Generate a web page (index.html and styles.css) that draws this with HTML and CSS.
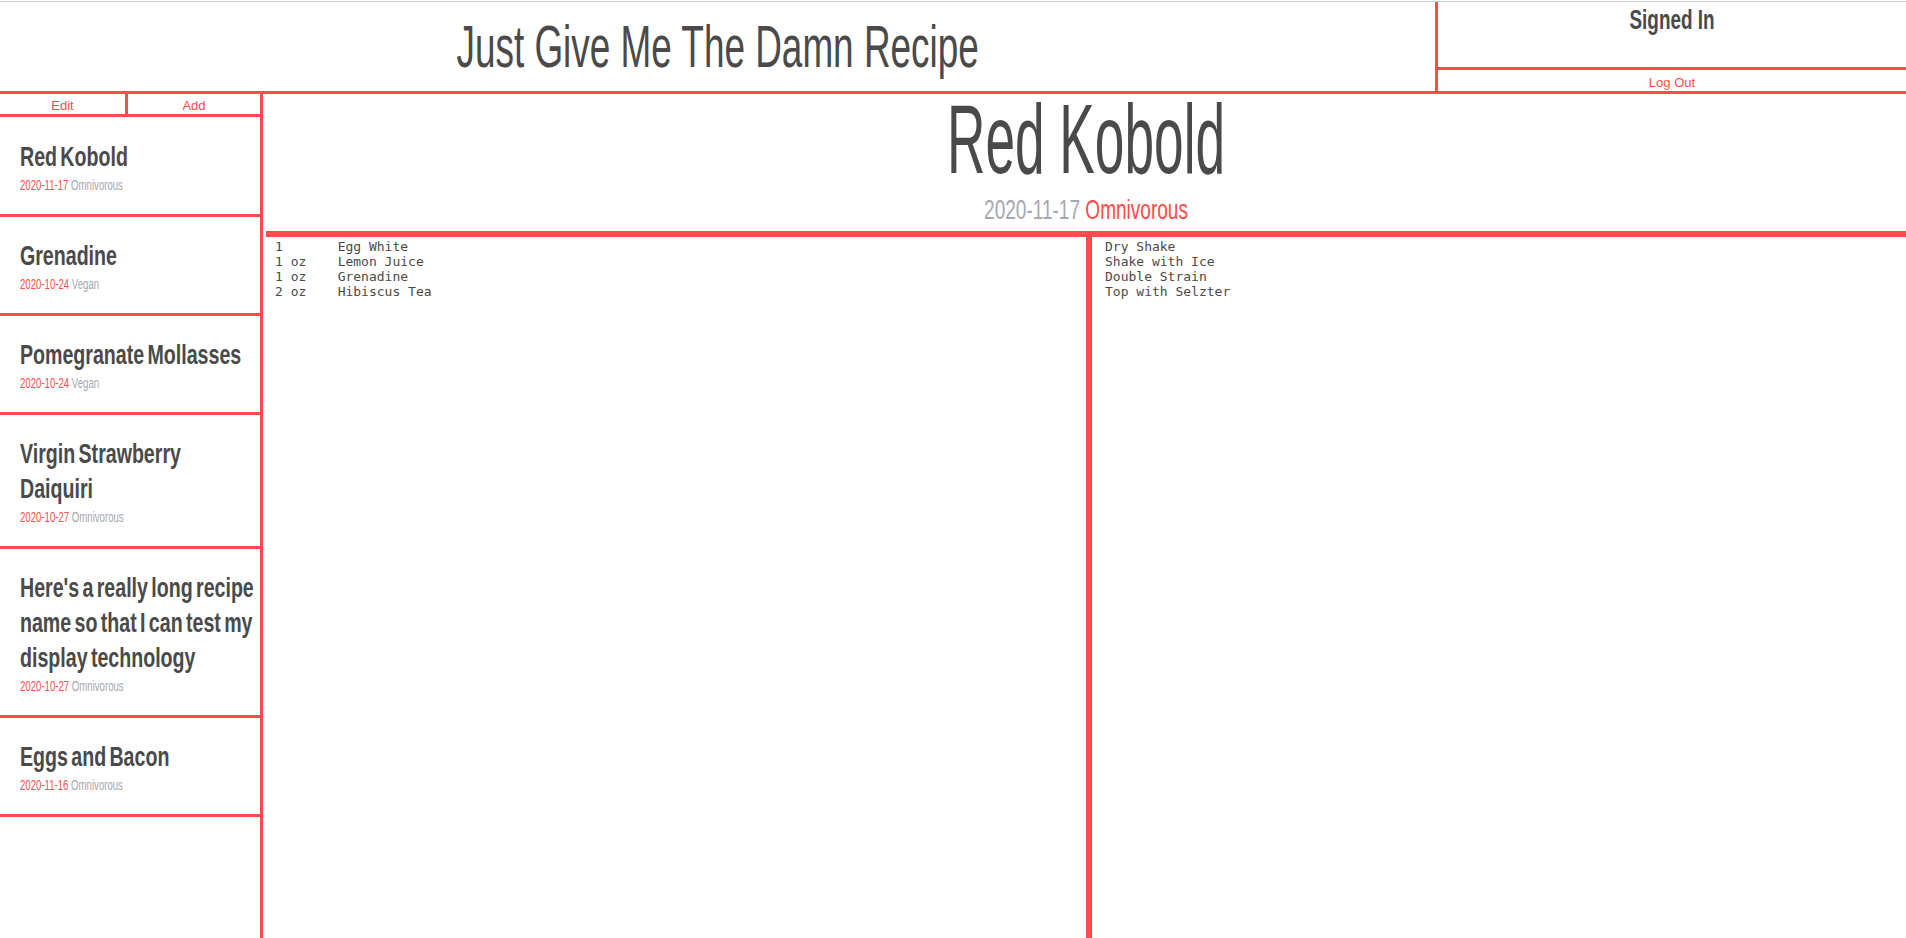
FILE: index.html
```html
<!DOCTYPE html>
<html lang="en">
<head>
<meta charset="utf-8">
<title>Just Give Me The Damn Recipe</title>
<link rel="stylesheet" href="styles.css">
</head>
<body>
<div class="topline"></div>
<header class="site-header">
  <div class="brand"><h1 class="brand-title">Just Give Me The Damn Recipe</h1></div>
  <div class="account">
    <div class="account-status"><h2 class="account-title">Signed In</h2></div>
    <a class="account-action">Log Out</a>
  </div>
</header>
<div class="layout">
  <aside class="sidebar">
    <div class="sidebar-actions">
      <a class="action">Edit</a>
      <a class="action">Add</a>
    </div>
    <ul class="recipe-list">
      <li class="recipe-item">
        <h3 class="item-title">Red Kobold</h3>
        <div class="item-meta"><span class="item-date">2020-11-17</span> <span class="item-diet">Omnivorous</span></div>
      </li>
      <li class="recipe-item">
        <h3 class="item-title">Grenadine</h3>
        <div class="item-meta"><span class="item-date">2020-10-24</span> <span class="item-diet">Vegan</span></div>
      </li>
      <li class="recipe-item">
        <h3 class="item-title">Pomegranate Mollasses</h3>
        <div class="item-meta"><span class="item-date">2020-10-24</span> <span class="item-diet">Vegan</span></div>
      </li>
      <li class="recipe-item">
        <h3 class="item-title">Virgin Strawberry Daiquiri</h3>
        <div class="item-meta"><span class="item-date">2020-10-27</span> <span class="item-diet">Omnivorous</span></div>
      </li>
      <li class="recipe-item">
        <h3 class="item-title">Here's a really long recipe name so that I can test my display technology</h3>
        <div class="item-meta"><span class="item-date">2020-10-27</span> <span class="item-diet">Omnivorous</span></div>
      </li>
      <li class="recipe-item">
        <h3 class="item-title">Eggs and Bacon</h3>
        <div class="item-meta"><span class="item-date">2020-11-16</span> <span class="item-diet">Omnivorous</span></div>
      </li>
    </ul>
  </aside>
  <main class="recipe">
    <div class="recipe-head">
      <h1 class="recipe-title">Red Kobold</h1>
      <div class="recipe-meta"><span class="recipe-date">2020-11-17</span> <span class="recipe-diet">Omnivorous</span></div>
    </div>
    <div class="recipe-body">
      <pre class="ingredients">1	Egg White
1 oz	Lemon Juice
1 oz	Grenadine
2 oz	Hibiscus Tea</pre>
      <pre class="steps">Dry Shake
Shake with Ice
Double Strain
Top with Selzter</pre>
    </div>
  </main>
</div>
</body>
</html>
```
FILE: styles.css
```css
* { box-sizing: border-box; }

html, body {
  margin: 0;
  padding: 0;
  background: #ffffff;
}

body {
  min-height: 100vh;
  display: flex;
  flex-direction: column;
  color: #4a4a4a;
  font-family: "Liberation Sans", Arial, sans-serif;
}

/* condensed display type: no condensed face is installed, so the
   regular face is narrowed horizontally */
.brand-title,
.account-title,
.item-title,
.item-meta,
.recipe-title,
.recipe-meta {
  font-family: "Liberation Sans", Arial, sans-serif;
}

.topline {
  height: 1px;
  margin-top: 1px;
  background: #c9c9c9;
}

/* ---------- header ---------- */
.site-header {
  display: flex;
  height: 92px;
  border-bottom: 3px solid #ff4b4b;
}

.brand {
  flex: 1;
  display: flex;
  align-items: center;
  justify-content: center;
}

.brand-title {
  margin: 0;
  font-weight: 400;
  font-size: 60px;
  line-height: 60px;
  color: #4a4a4a;
  white-space: nowrap;
  transform: scaleX(0.615);
}

.account {
  width: 471px;
  border-left: 3px solid #ff4b4b;
  display: flex;
  flex-direction: column;
}

.account-status {
  height: 68px;
  padding-top: 2px;
  border-bottom: 3px solid #ff4b4b;
  text-align: center;
}

.account-title {
  margin: 0;
  font-weight: 700;
  font-size: 27px;
  line-height: 32px;
  color: #4a4a4a;
  transform: scaleX(0.7);
}

.account-action {
  flex: 1;
  display: flex;
  align-items: center;
  justify-content: center;
  padding-top: 3px;
  font-size: 13px;
  color: #ff4b4b;
}

/* ---------- layout ---------- */
.layout {
  flex: 1;
  display: flex;
}

.sidebar {
  width: 263px;
  flex-shrink: 0;
  border-right: 3px solid #ff4b4b;
}

.sidebar-actions {
  display: flex;
  height: 23px;
  border-bottom: 3px solid #ff4b4b;
}

.action {
  display: flex;
  align-items: center;
  justify-content: center;
  padding-top: 2px;
  font-size: 13px;
  color: #ff4b4b;
}

.action:first-child {
  width: 128px;
  border-right: 3px solid #ff4b4b;
}

.action:last-child {
  flex: 1;
}

.recipe-list {
  list-style: none;
  margin: 0;
  padding: 1px 0 0;
}

.recipe-item {
  padding: 21px 0 19px 20px;
  border-bottom: 3px solid #ff4b4b;
}

.item-title {
  width: 337px;
  margin: 0;
  font-weight: 700;
  font-size: 28px;
  line-height: 35px;
  word-spacing: -3px;
  color: #4a4a4a;
  transform: scaleX(0.7);
  transform-origin: 0 0;
}

.item-meta {
  margin-top: 1px;
  font-weight: 400;
  font-size: 15.5px;
  line-height: 20px;
  white-space: nowrap;
  transform: scaleX(0.62);
  transform-origin: 0 0;
}

.item-date { color: #ff4b4b; }
.item-diet { color: #a5a8b0; }

/* ---------- recipe ---------- */
.recipe {
  flex: 1;
  display: flex;
  flex-direction: column;
  padding-left: 3px;
}

.recipe-head {
  text-align: center;
  border-bottom: 6px solid #ff4b4b;
  padding: 3px 0 6px;
}

.recipe-title {
  margin: 0;
  font-weight: 400;
  font-size: 98px;
  line-height: 84px;
  color: #4a4a4a;
  transform: scaleX(0.543);
}

.recipe-meta {
  margin-top: 14px;
  font-weight: 400;
  font-size: 28px;
  line-height: 30px;
  transform: scaleX(0.68);
}

.recipe-date { color: #a5a8b0; }
.recipe-diet { color: #ff4b4b; }

.recipe-body {
  flex: 1;
  display: grid;
  grid-template-columns: 1fr 1fr;
}

.ingredients,
.steps {
  margin: 0;
  padding-top: 2px;
  font-family: "DejaVu Sans Mono", "Liberation Mono", monospace;
  font-size: 13px;
  line-height: 15px;
  color: #4a4a4a;
  tab-size: 8;
}

.ingredients {
  padding-left: 9px;
}

.steps {
  border-left: 6px solid #ff4b4b;
  padding-left: 13px;
}
```
